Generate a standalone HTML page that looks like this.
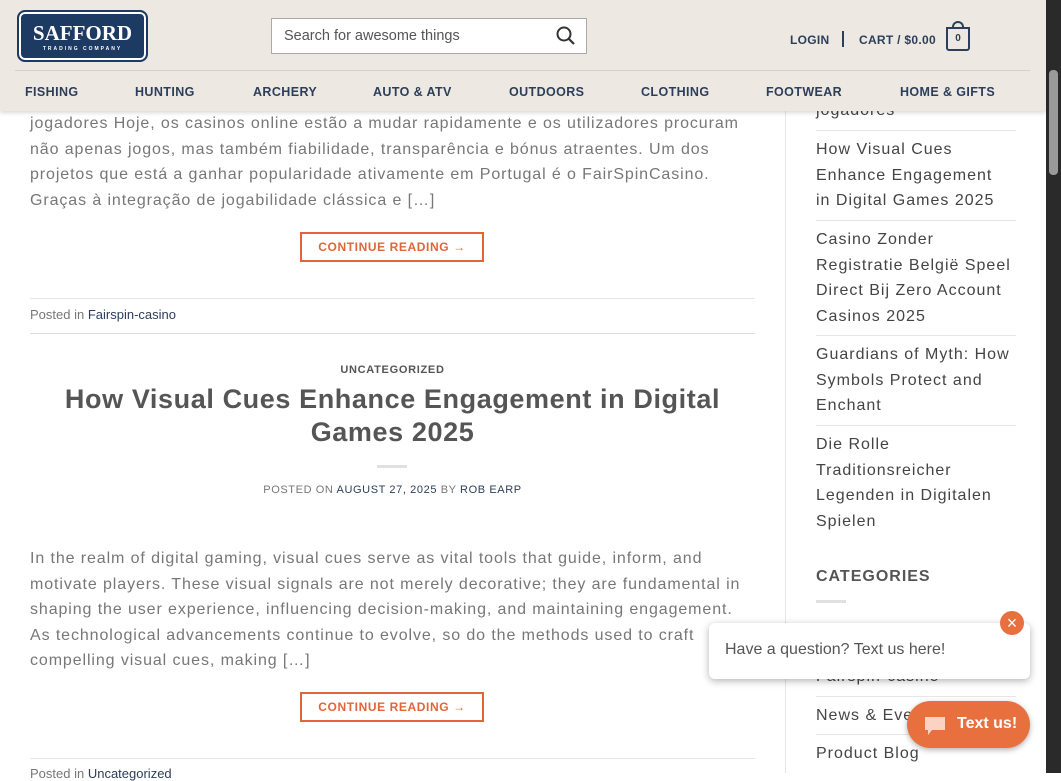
<!DOCTYPE html>
<html><head><meta charset="utf-8"><style>
*{box-sizing:border-box;margin:0;padding:0}
body{width:1061px;height:773px;overflow:hidden;background:#fff;font-family:"Liberation Sans",sans-serif;position:relative;color:#777}
.hdr{position:absolute;left:0;top:0;width:1046px;height:111px;background:#ede9e2;box-shadow:0 2px 4px rgba(0,0,0,.15);z-index:5}
.logo{position:absolute;left:17px;top:10px;width:131px;height:52px;background:#1d3a63;border:2px solid #1d3a63;border-radius:8px;box-shadow:inset 0 0 0 2px #fff;color:#fff;text-align:center}
.logo b{display:block;font-family:"Liberation Serif",serif;font-size:21px;font-weight:bold;margin-top:9px;letter-spacing:0}
.logo i{display:block;font-style:normal;font-size:5px;letter-spacing:2px;font-weight:bold}
.search{position:absolute;left:271px;top:18px;width:316px;height:36px;background:#fff;border:1px solid #aaa;font-size:14.5px;color:#555;padding:9px 12px}
.rt{position:absolute;top:33px;font-size:12px;font-weight:bold;color:#2c3e5a;letter-spacing:.3px}
.line{position:absolute;left:15px;right:16px;top:70px;border-top:1px solid #d5d0c8}
.nav{position:absolute;top:85px;font-size:12.5px;font-weight:bold;color:#2c3e5a;letter-spacing:.4px}
.main p{position:absolute;left:30px;width:740px;font-size:16px;line-height:25.6px;color:#777;white-space:nowrap;letter-spacing:.9px}
.btn{position:absolute;left:300px;width:184px;height:30px;border:2px solid #e0663a;color:#e0663a;font-size:12px;font-weight:bold;text-align:center;line-height:26px;letter-spacing:.6px}
.hr{position:absolute;left:30px;width:725px;border-top:1px solid #e6e6e6}
.side{position:absolute;left:816px;width:220px;font-size:16px;line-height:25.6px;color:#444;white-space:nowrap;letter-spacing:1px}
.sl{position:absolute;left:816px;width:200px;border-top:1px solid #e6e6e6}
</style></head><body>
<div class="hdr">
<div class="logo"><b>SAFFORD</b><i>TRADING COMPANY</i></div>
<div class="search">Search for awesome things
<svg style="position:absolute;right:10px;top:7px" width="20" height="20" viewBox="0 0 20 20"><circle cx="8" cy="8" r="6.5" fill="none" stroke="#333" stroke-width="2"/><path d="M13 13l5 5" stroke="#333" stroke-width="2.2"/></svg></div>
<div class="rt" style="left:790px">LOGIN</div>
<div style="position:absolute;left:842px;top:31px;height:16px;border-left:2px solid #2c3e5a"></div>
<div class="rt" style="left:859px">CART / $0.00</div>
<div style="position:absolute;left:946px;top:27px;width:24px;height:24px;border:2px solid #2c3e5a;border-radius:0 0 3px 3px;font-size:10px;font-weight:bold;color:#2c3e5a;text-align:center;line-height:20px">0</div>
<div style="position:absolute;left:952px;top:21px;width:12px;height:8px;border:2px solid #2c3e5a;border-bottom:none;border-radius:6px 6px 0 0"></div>
<div class="line"></div>
<div class="nav" style="left:25px">FISHING</div>
<div class="nav" style="left:135px">HUNTING</div>
<div class="nav" style="left:253px">ARCHERY</div>
<div class="nav" style="left:373px">AUTO &amp; ATV</div>
<div class="nav" style="left:509px">OUTDOORS</div>
<div class="nav" style="left:641px">CLOTHING</div>
<div class="nav" style="left:766px">FOOTWEAR</div>
<div class="nav" style="left:900px">HOME &amp; GIFTS</div>
</div>
<div class="main">
<p style="top:111px">jogadores Hoje, os casinos online estão a mudar rapidamente e os utilizadores procuram<br>não apenas jogos, mas também fiabilidade, transparência e bónus atraentes. Um dos<br>projetos que está a ganhar popularidade ativamente em Portugal é o FairSpinCasino.<br>Graças à integração de jogabilidade clássica e […]</p>
<div class="btn" style="top:232px">CONTINUE READING →</div>
<div class="hr" style="top:298px"></div>
<div style="position:absolute;left:30px;top:307px;font-size:13px;color:#777">Posted in <span style="color:#2c3e5a">Fairspin-casino</span></div>
<div class="hr" style="top:333px;border-color:#ddd"></div>
<div style="position:absolute;left:30px;width:725px;top:364px;text-align:center;font-size:11px;font-weight:bold;color:#555;letter-spacing:.7px">UNCATEGORIZED</div>
<div style="position:absolute;left:30px;width:725px;top:383px;text-align:center;font-size:27px;line-height:33px;font-weight:bold;color:#555;letter-spacing:.6px">How Visual Cues Enhance Engagement in Digital<br>Games 2025</div>
<div style="position:absolute;left:377px;top:465px;width:30px;border-top:3px solid #e0e0e0"></div>
<div style="position:absolute;left:30px;width:725px;top:484px;text-align:center;font-size:11px;color:#777;letter-spacing:.6px">POSTED ON <span style="color:#2c3e5a">AUGUST 27, 2025</span> BY <span style="color:#2c3e5a">ROB EARP</span></div>
<p style="top:546px">In the realm of digital gaming, visual cues serve as vital tools that guide, inform, and<br>motivate players. These visual signals are not merely decorative; they are fundamental in<br>shaping the user experience, influencing decision-making, and maintaining engagement.<br>As technological advancements continue to evolve, so do the methods used to craft<br>compelling visual cues, making […]</p>
<div class="btn" style="top:692px">CONTINUE READING →</div>
<div class="hr" style="top:758px"></div>
<div style="position:absolute;left:30px;top:766px;font-size:13px">Posted in <span style="color:#2c3e5a">Uncategorized</span></div>
</div>
<div style="position:absolute;left:785px;top:111px;height:662px;border-left:1px solid #e6e6e6"></div>
<div class="side" style="top:98px">jogadores</div>
<div class="sl" style="top:130px"></div>
<div class="side" style="top:137px">How Visual Cues<br>Enhance Engagement<br>in Digital Games 2025</div>
<div class="sl" style="top:220px"></div>
<div class="side" style="top:227px">Casino Zonder<br>Registratie België Speel<br>Direct Bij Zero Account<br>Casinos 2025</div>
<div class="sl" style="top:335px"></div>
<div class="side" style="top:342px">Guardians of Myth: How<br>Symbols Protect and<br>Enchant</div>
<div class="sl" style="top:425px"></div>
<div class="side" style="top:432px">Die Rolle<br>Traditionsreicher<br>Legenden in Digitalen<br>Spielen</div>
<div style="position:absolute;left:816px;top:568px;font-size:16px;font-weight:bold;color:#555;letter-spacing:1px">CATEGORIES</div>
<div style="position:absolute;left:816px;top:600px;width:30px;border-top:3px solid #e0e0e0"></div>
<div class="side" style="top:664px">Fairspin-casino</div>
<div class="sl" style="top:696px"></div>
<div class="side" style="top:703px">News &amp; Events</div>
<div class="sl" style="top:734px"></div>
<div class="side" style="top:741px">Product Blog</div>
<div style="position:absolute;left:709px;top:623px;width:321px;height:56px;background:#fff;border-radius:6px;box-shadow:0 2px 8px rgba(0,0,0,.3);font-size:16px;color:#555;padding:18px 16px;z-index:6">Have a question? Text us here!</div>
<div style="position:absolute;left:1000px;top:611px;width:24px;height:24px;border-radius:50%;background:#e8703f;color:#fff;text-align:center;line-height:24px;font-size:18px;z-index:7">×</div>
<div style="position:absolute;left:907px;top:701px;width:123px;height:47px;border-radius:24px;background:#e8703f;box-shadow:0 2px 6px rgba(0,0,0,.3);z-index:7;color:#fff;font-weight:bold;font-size:16px;padding:14px 0 0 50px">Text us!
<svg style="position:absolute;left:17px;top:14px" width="22" height="22" viewBox="0 0 22 22"><path d="M1 2h20v13H8l-4 5v-5H1z" fill="#fcd3c2"/></svg></div>
<div style="position:absolute;left:1046px;top:0;width:15px;height:773px;background:#2a2a2a"></div>
<div style="position:absolute;left:1049px;top:70px;width:9px;height:105px;background:#9a9a9a;border-radius:4px"></div>
</body></html>
